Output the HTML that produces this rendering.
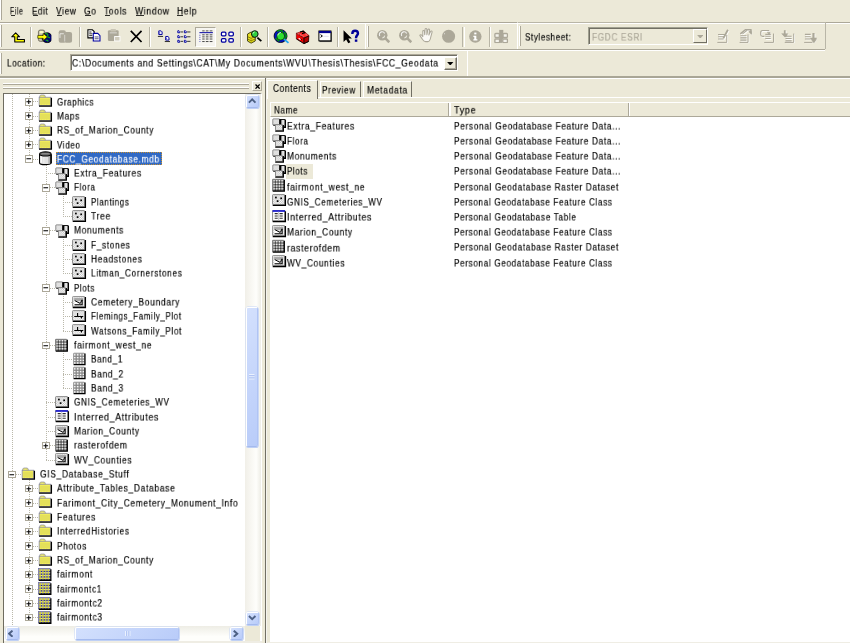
<!DOCTYPE html>
<html><head><meta charset="utf-8"><style>
html,body{margin:0;padding:0;width:850px;height:643px;overflow:hidden;background:#ECE9D8}
body{position:relative;font-family:"Liberation Sans",sans-serif;font-size:10px;color:#000}
div,span,svg{position:absolute}
.t{white-space:nowrap;line-height:12px;transform-origin:0 0;-webkit-font-smoothing:antialiased;will-change:transform;-webkit-text-stroke:0.18px currentColor}
.pb{width:7.5px;height:7.5px;border:1px solid #ACA899;background:#fff;box-sizing:border-box}
.sbtn{background:linear-gradient(135deg,#D3E0FD,#B9CCF9);border:1px solid #fff;border-right-color:#B0C4F4;border-bottom-color:#A4BAEE;border-radius:2px;box-sizing:border-box;box-shadow:0 0 0 0.5px #C6D5F7,0.4px 0.8px 0 0.2px #B8CAF2}
</style></head><body>
<svg width="0" height="0" style="position:absolute"><defs>
<pattern id="dith" width="2" height="2" patternUnits="userSpaceOnUse"><rect width="2" height="2" fill="#fff"/><rect width="1" height="1" fill="#C0C0C0"/><rect x="1" y="1" width="1" height="1" fill="#C0C0C0"/></pattern>
<pattern id="dithy" width="2" height="2" patternUnits="userSpaceOnUse"><rect width="2" height="2" fill="#FFFF60"/><rect width="1" height="1" fill="#E0D860"/><rect x="1" y="1" width="1" height="1" fill="#E8E070"/></pattern>
<symbol id="i_folder" viewBox="0 0 16 16"><path d="M2 4.6V2.2L2.9 1.2H7.1L8 2.2V4.6" fill="#F6F25A" stroke="#8A8AA6" stroke-width="0.9"/><path d="M3 2.6H7" stroke="#FFFFA0" stroke-width="0.8" stroke-dasharray="0.9 0.9"/><rect x="1.3" y="3.6" width="12.9" height="9.3" fill="#F4F05A" stroke="#8A8AA6" stroke-width="0.9"/><rect x="2.3" y="5.3" width="11" height="6.6" fill="#E4E05A"/><path d="M2.6 11.9H13" stroke="#F8F470" stroke-width="0.8" stroke-dasharray="0.9 0.9"/><path d="M1.1 13.5H15V4.1" fill="none" stroke="#000" stroke-width="1.5"/></symbol>
<symbol id="i_gdb" viewBox="0 0 16 16" overflow="visible"><path d="M1.8 2.2V12.2C1.8 14.8 14.6 14.8 14.6 12.2V2.2" fill="#E2E2E2" stroke="#000" stroke-width="1.3"/><path d="M3.4 4.5V12" stroke="#fff" stroke-width="1.6"/><path d="M6.5 5.5V12.5" stroke="#F0F0F0" stroke-width="1"/><path d="M12.4 4.5V12.6" stroke="#A8A8A8" stroke-width="1.5"/><path d="M14.6 3V12.5" stroke="#000" stroke-width="1.6"/><ellipse cx="8.2" cy="2.2" rx="6.4" ry="2.3" fill="#6C6C6C" stroke="#000" stroke-width="1.3"/><path d="M4.5 1.8H12" stroke="#9A9A9A" stroke-width="0.8"/></symbol>
<symbol id="i_fds" viewBox="0 0 16 16" overflow="visible"><g transform="translate(0 1)"><rect x="0.9" y="1.1" width="7.8" height="7" rx="0.6" fill="url(#dith)" stroke="#808080" stroke-width="1"/><path d="M1.4 8.2H8.6" stroke="#000" stroke-width="0.9"/><rect x="8.6" y="1.9" width="6" height="8.2" fill="#fff" stroke="#000" stroke-width="1.1"/><path d="M9.6 1.9V10" stroke="#000" stroke-width="1.9"/><path d="M12.2 3V9" stroke="#B8B8B8" stroke-width="1"/><path d="M15 2.4V10.7H12.5" fill="none" stroke="#000" stroke-width="1.3"/><rect x="3.9" y="7.6" width="8" height="6.4" rx="0.6" fill="url(#dith)" stroke="#808080" stroke-width="1"/><path d="M3.6 14.7H12.6V7.8" fill="none" stroke="#000" stroke-width="1.5"/></g></symbol>
<symbol id="i_pt" viewBox="0 0 16 16"><rect x="0.6" y="1.8" width="13.6" height="11.2" rx="0.8" fill="url(#dith)" stroke="#808080" stroke-width="1"/><path d="M0.8 13.8H15V2.2" fill="none" stroke="#000" stroke-width="1.6"/><rect x="3.4" y="4.1" width="1.9" height="1.9"/><rect x="9.3" y="5" width="1.9" height="1.9"/><rect x="5.3" y="8.1" width="1.9" height="1.9"/></symbol>
<symbol id="i_poly" viewBox="0 0 16 16"><rect x="0.6" y="1.7" width="13.6" height="11.5" rx="0.8" fill="url(#dith)" stroke="#8C8C8C" stroke-width="1"/><rect x="2.4" y="3.4" width="10" height="3.2" fill="#A8A8A8"/><path d="M0.8 13.9H15V2.2" fill="none" stroke="#000" stroke-width="1.6"/><path d="M2.6 6.4L9.2 9.6L11.6 5.4V10.8H2.6Z" fill="#fff"/><path d="M12.2 5V11" stroke="#fff" stroke-width="0.9"/><path d="M2.9 10.9H11.3V5.2" fill="none" stroke="#000" stroke-width="1.3"/><path d="M3.2 6.3L9.2 9.5L11.3 5.4" fill="none" stroke="#000" stroke-width="1.1"/></symbol>
<symbol id="i_line" viewBox="0 0 16 16"><rect x="0.6" y="1.8" width="13.6" height="11.2" rx="0.8" fill="url(#dith)" stroke="#808080" stroke-width="1"/><path d="M0.8 13.8H15V2.2" fill="none" stroke="#000" stroke-width="1.6"/><path d="M2.5 8.4H12.5M6.2 4.5V8.4M10.5 8.4V11" fill="none" stroke="#000" stroke-width="1.3"/><path d="M2.5 11.2H12.5" stroke="#fff" stroke-width="1" stroke-dasharray="1 1"/></symbol>
<symbol id="i_ras" viewBox="0 0 16 16"><rect x="0.4" y="1.4" width="12.8" height="12.8" rx="0.6" fill="#7C7C7C" stroke="#6A6A6A" stroke-width="0.8"/><g fill="#F8F8F8"><rect x="1.60" y="2.30" width="1.4" height="1.4"/><rect x="4.60" y="2.30" width="1.4" height="1.4"/><rect x="7.60" y="2.30" width="1.4" height="1.4"/><rect x="10.60" y="2.30" width="1.4" height="1.4"/><rect x="1.60" y="5.30" width="1.4" height="1.4"/><rect x="4.60" y="5.30" width="1.4" height="1.4"/><rect x="7.60" y="5.30" width="1.4" height="1.4"/><rect x="10.60" y="5.30" width="1.4" height="1.4"/><rect x="1.60" y="8.30" width="1.4" height="1.4"/><rect x="4.60" y="8.30" width="1.4" height="1.4"/><rect x="7.60" y="8.30" width="1.4" height="1.4"/><rect x="10.60" y="8.30" width="1.4" height="1.4"/><rect x="1.60" y="11.30" width="1.4" height="1.4"/><rect x="4.60" y="11.30" width="1.4" height="1.4"/><rect x="7.60" y="11.30" width="1.4" height="1.4"/><rect x="10.60" y="11.30" width="1.4" height="1.4"/></g><g fill="#1A1A1A"><rect x="3.20" y="3.90" width="1.1" height="1.1"/><rect x="6.20" y="3.90" width="1.1" height="1.1"/><rect x="9.20" y="3.90" width="1.1" height="1.1"/><rect x="12.20" y="3.90" width="1.1" height="1.1"/><rect x="3.20" y="6.90" width="1.1" height="1.1"/><rect x="6.20" y="6.90" width="1.1" height="1.1"/><rect x="9.20" y="6.90" width="1.1" height="1.1"/><rect x="12.20" y="6.90" width="1.1" height="1.1"/><rect x="3.20" y="9.90" width="1.1" height="1.1"/><rect x="6.20" y="9.90" width="1.1" height="1.1"/><rect x="9.20" y="9.90" width="1.1" height="1.1"/><rect x="12.20" y="9.90" width="1.1" height="1.1"/><rect x="3.20" y="12.90" width="1.1" height="1.1"/><rect x="6.20" y="12.90" width="1.1" height="1.1"/><rect x="9.20" y="12.90" width="1.1" height="1.1"/><rect x="12.20" y="12.90" width="1.1" height="1.1"/></g><path d="M0.8 14.6H13.8V2" fill="none" stroke="#000" stroke-width="1.3"/></symbol>
<symbol id="i_band" viewBox="0 0 16 16"><rect x="1.7" y="1.3" width="12.2" height="12.4" rx="0.6" fill="#B8B8B8" stroke="#8A8A8A" stroke-width="0.8"/><g fill="#FAFAFA"><rect x="2.30" y="2.50" width="1.6" height="1.4"/><rect x="5.60" y="2.50" width="1.6" height="1.4"/><rect x="8.80" y="2.50" width="1.6" height="1.4"/><rect x="11.80" y="2.50" width="1.6" height="1.4"/><rect x="2.30" y="5.65" width="1.6" height="1.4"/><rect x="5.60" y="5.65" width="1.6" height="1.4"/><rect x="8.80" y="5.65" width="1.6" height="1.4"/><rect x="11.80" y="5.65" width="1.6" height="1.4"/><rect x="2.30" y="8.60" width="1.6" height="1.4"/><rect x="5.60" y="8.60" width="1.6" height="1.4"/><rect x="8.80" y="8.60" width="1.6" height="1.4"/><rect x="11.80" y="8.60" width="1.6" height="1.4"/><rect x="2.30" y="11.50" width="1.6" height="1.4"/><rect x="5.60" y="11.50" width="1.6" height="1.4"/><rect x="8.80" y="11.50" width="1.6" height="1.4"/><rect x="11.80" y="11.50" width="1.6" height="1.4"/></g><path d="M4.7 1.6V13.5M8.1 1.6V13.5M11.2 1.6V13.5M2 4.8H13.6M2 7.9H13.6M2 10.7H13.6" stroke="#7A7A7A" stroke-width="0.8"/><path d="M1.8 14.2H14.5V1.8" fill="none" stroke="#000" stroke-width="1.4"/></symbol>
<symbol id="i_tbl" viewBox="0 0 16 16"><rect x="0.7" y="2" width="13.6" height="11.4" fill="#fff" stroke="#808080" stroke-width="1"/><path d="M0.6 2.3H14.6" stroke="#0000D0" stroke-width="1.6"/><path d="M0.8 14H15V2.6" fill="none" stroke="#000" stroke-width="1.5"/><path d="M3 5.2H6.4M8.4 5.2H12M3 7.8H6.4M8.4 7.8H12M3 10.4H6.4M8.4 10.4H12" stroke="#303030" stroke-width="1.2"/><path d="M7.4 3V13" stroke="#B0B0B0" stroke-width="0.8"/></symbol>
<symbol id="i_rasc" viewBox="0 0 16 16"><rect x="0.5" y="1.6" width="13" height="12.6" fill="#8C8CA0" stroke="#7070A0" stroke-width="0.8"/><path d="M0.8 14.8H14.3V2.4" fill="none" stroke="#000" stroke-width="1.5"/><g fill="#F4F000"><rect x="1.60" y="2.70" width="1.7" height="1.6"/><rect x="4.65" y="2.70" width="1.7" height="1.6"/><rect x="7.70" y="2.70" width="1.7" height="1.6"/><rect x="10.75" y="2.70" width="1.7" height="1.6"/><rect x="1.60" y="5.75" width="1.7" height="1.6"/><rect x="4.65" y="5.75" width="1.7" height="1.6"/><rect x="7.70" y="5.75" width="1.7" height="1.6"/><rect x="10.75" y="5.75" width="1.7" height="1.6"/><rect x="1.60" y="8.80" width="1.7" height="1.6"/><rect x="4.65" y="8.80" width="1.7" height="1.6"/><rect x="7.70" y="8.80" width="1.7" height="1.6"/><rect x="10.75" y="8.80" width="1.7" height="1.6"/><rect x="1.60" y="11.85" width="1.7" height="1.6"/><rect x="4.65" y="11.85" width="1.7" height="1.6"/><rect x="7.70" y="11.85" width="1.7" height="1.6"/><rect x="10.75" y="11.85" width="1.7" height="1.6"/></g><g fill="#F0F0F8"><rect x="3.50" y="2.90" width="0.9" height="0.9"/><rect x="6.55" y="2.90" width="0.9" height="0.9"/><rect x="9.60" y="2.90" width="0.9" height="0.9"/><rect x="12.65" y="2.90" width="0.9" height="0.9"/><rect x="3.50" y="5.95" width="0.9" height="0.9"/><rect x="6.55" y="5.95" width="0.9" height="0.9"/><rect x="9.60" y="5.95" width="0.9" height="0.9"/><rect x="12.65" y="5.95" width="0.9" height="0.9"/><rect x="3.50" y="9.00" width="0.9" height="0.9"/><rect x="6.55" y="9.00" width="0.9" height="0.9"/><rect x="9.60" y="9.00" width="0.9" height="0.9"/><rect x="12.65" y="9.00" width="0.9" height="0.9"/><rect x="3.50" y="12.05" width="0.9" height="0.9"/><rect x="6.55" y="12.05" width="0.9" height="0.9"/><rect x="9.60" y="12.05" width="0.9" height="0.9"/><rect x="12.65" y="12.05" width="0.9" height="0.9"/></g><g fill="#181820"><rect x="3.50" y="4.50" width="0.9" height="0.9"/><rect x="6.55" y="4.50" width="0.9" height="0.9"/><rect x="9.60" y="4.50" width="0.9" height="0.9"/><rect x="12.65" y="4.50" width="0.9" height="0.9"/><rect x="3.50" y="7.55" width="0.9" height="0.9"/><rect x="6.55" y="7.55" width="0.9" height="0.9"/><rect x="9.60" y="7.55" width="0.9" height="0.9"/><rect x="12.65" y="7.55" width="0.9" height="0.9"/><rect x="3.50" y="10.60" width="0.9" height="0.9"/><rect x="6.55" y="10.60" width="0.9" height="0.9"/><rect x="9.60" y="10.60" width="0.9" height="0.9"/><rect x="12.65" y="10.60" width="0.9" height="0.9"/><rect x="3.50" y="13.65" width="0.9" height="0.9"/><rect x="6.55" y="13.65" width="0.9" height="0.9"/><rect x="9.60" y="13.65" width="0.9" height="0.9"/><rect x="12.65" y="13.65" width="0.9" height="0.9"/></g></symbol>

<symbol id="tb_up" viewBox="0 0 16 16"><path d="M5.2 3.2L9.6 7.6H7V10.6H15V13.4H4.2V7.6H0.8Z" fill="#FFFF00" stroke="#000" stroke-width="1.2" stroke-linejoin="round"/></symbol>
<symbol id="tb_conn" viewBox="0 0 16 16"><rect x="1.6" y="1.2" width="7" height="12.6" rx="2" fill="#C8C4B0" stroke="#555040" stroke-width="0.8"/><rect x="3" y="2.2" width="4" height="2.6" rx="1" fill="#FFFFC0"/><circle cx="11.3" cy="9.8" r="5.6" fill="#000070" stroke="#000" stroke-width="0.9"/><path d="M9 4.8C11 5 12.5 6 12 7.5C11.5 9 13 10 14.5 9.5M9.8 13C10.5 12 12 12.5 12.5 14" fill="none" stroke="#10A020" stroke-width="1.5"/><path d="M8 9.6L9.8 9.6" stroke="#2060FF" stroke-width="1"/><path d="M0.9 7.2H6.9V4.8L11.6 8.8L6.9 12.8V10.4H0.9Z" fill="#FFFF00" stroke="#303000" stroke-width="0.8"/></symbol>
<symbol id="tb_disc" viewBox="0 0 16 16"><rect x="0.8" y="1.4" width="8" height="14" rx="2.2" fill="#ACA899"/><rect x="6.8" y="3.4" width="9" height="12" rx="2.5" fill="#ACA899"/><path d="M2.2 5.3H6.5M2.2 5.3V10" stroke="#fff" stroke-width="0.9" fill="none" opacity=".85"/><path d="M7.5 6.5V14" stroke="#fff" stroke-width="0.8" opacity=".7"/></symbol>
<symbol id="tb_copy" viewBox="0 0 16 16"><path d="M1 2H6L8 4V11H1Z" fill="#fff" stroke="#000" stroke-width="1.2"/><path d="M2.5 4.5H5M2.5 6.5H6M2.5 8.5H6" stroke="#000" stroke-width="0.9"/><path d="M7 6H12L14.5 8.5V14.5H7Z" fill="#fff" stroke="#0000A0" stroke-width="1.2"/><path d="M8.5 10H13M8.5 12H13" stroke="#303060" stroke-width="0.9"/></symbol>
<symbol id="tb_paste" viewBox="0 0 16 16"><rect x="1" y="2.5" width="12" height="12" rx="1.5" fill="#ACA899"/><rect x="4" y="1" width="6" height="3" rx="1" fill="#C8C4B4"/><rect x="3" y="4.8" width="8" height="1.2" fill="#fff" opacity=".5"/><rect x="8" y="9" width="7" height="6" fill="#fff"/><rect x="9" y="10" width="5" height="4" fill="#D0CCBC"/></symbol>
<symbol id="tb_del" viewBox="0 0 16 16"><path d="M2 2L14 14.5M14 2L2 14.5" stroke="#000" stroke-width="1.9"/></symbol>
<symbol id="tb_large" viewBox="0 0 16 16"><path d="M2 2.1H4.6L5.7 3.2V6.2H2Z" fill="#fff" stroke="#0000A0" stroke-width="1.1"/><path d="M3 3.5V5.3" stroke="#0000A0" stroke-width="0.6"/><path d="M1 8.3H6.8" stroke="#000" stroke-width="0.9"/><path d="M9.7 8.4H12.2L13.4 9.5V12.4H9.7Z" fill="#fff" stroke="#0000A0" stroke-width="1.1"/><path d="M10.7 9.8V11.5" stroke="#0000A0" stroke-width="0.6"/><path d="M8.7 14H14.5" stroke="#000" stroke-width="0.9"/></symbol>
<symbol id="tb_list" viewBox="0 0 16 16"><g fill="#fff" stroke="#0000A0" stroke-width="1.1"><path d="M0.9 2H2.3L3 2.7V4.2H0.9Z"/><path d="M0.9 7.5H2.3L3 8.2V9.7H0.9Z"/><path d="M0.9 12.6H2.3L3 13.3V14.8H0.9Z"/><path d="M8.2 2H9.6L10.3 2.7V4.2H8.2Z"/><path d="M8.2 7.5H9.6L10.3 8.2V9.7H8.2Z"/><path d="M8.2 12.6H9.6L10.3 13.3V14.8H8.2Z"/></g><path d="M4 3.3H6.8M11.3 3.3H15M4 8.7H6.8M11.3 8.7H15M4 13.8H6.8M11.3 13.8H15" stroke="#333" stroke-width="1.1"/></symbol>
<symbol id="tb_det" viewBox="0 0 16 16"><path d="M3.6 2.1H6.3M7.6 2.1H10.6M11.9 2.1H15" stroke="#404040" stroke-width="1"/><path d="M0.5 4.1H15.5" stroke="#0000A0" stroke-width="1.1"/><path d="M1 6.5V14.2" stroke="#0000A0" stroke-width="0.9" stroke-dasharray="0.9 1.4"/><path d="M3.6 6.5H6.3M7.6 6.5H10.6M11.9 6.5H15M3.6 8.8H6.3M7.6 8.8H10.6M11.9 8.8H15M3.6 11.2H6.3M7.6 11.2H10.6M11.9 11.2H15M3.6 14H6.3M7.6 14H10.6M11.9 14H15" stroke="#202020" stroke-width="0.9"/></symbol>
<symbol id="tb_thumb" viewBox="0 0 16 16"><g fill="#fff" stroke="#0000A0" stroke-width="1.4"><rect x="1.6" y="3.6" width="5" height="4" rx="1.2"/><rect x="9.9" y="3.6" width="5" height="4" rx="1.2"/><rect x="1.6" y="10.7" width="5" height="4" rx="1.2"/><rect x="9.9" y="10.7" width="5" height="4" rx="1.2"/></g></symbol>
<symbol id="tb_search" viewBox="0 0 16 16" overflow="visible"><path d="M0.6 5.6L4.6 3.4L9.2 5.2V13.4L4.6 15.8L0.6 13.5Z" fill="#E8E020" stroke="#202000" stroke-width="0.9"/><path d="M0.8 8.6L4.6 10.4L9 8.6M0.8 11.3L4.6 13.1L9 11.3" fill="none" stroke="#706800" stroke-width="0.9"/><path d="M4.6 10.4V15.6" stroke="#A09800" stroke-width="0.7"/><path d="M11.6 9.7L16 13.6" stroke="#000" stroke-width="2"/><circle cx="8.7" cy="5.6" r="3.7" fill="#30D040" stroke="#101010" stroke-width="1.1"/><path d="M6.7 5.2C6.7 4.2 7.5 3.5 8.4 3.5" stroke="#E0FFE0" stroke-width="1" fill="none"/></symbol>
<symbol id="tb_globe" viewBox="0 0 16 16" overflow="visible"><circle cx="7.3" cy="7.9" r="7.2" fill="#0010C8" stroke="#000" stroke-width="0.9"/><path d="M3.5 2.5C5 1.8 7.5 1.5 9 2.5C10 3.5 9 4.5 7.5 4.6M11 3.5C12.5 4.5 13.5 6 13.8 8C13 9 12 10 11.5 12M2 10C3 11 4 12.5 6 13.5" fill="none" stroke="#009010" stroke-width="1.8"/><path d="M10.8 11.1L16.2 15.6" stroke="#20A8F0" stroke-width="1.9"/><circle cx="7.5" cy="8" r="4.4" fill="#30E030" stroke="#103010" stroke-width="0.9"/><path d="M4.3 7.2C4.5 5.4 5.8 4.1 7.6 3.9" stroke="#E8FFFF" stroke-width="1.1" fill="none"/></symbol>
<symbol id="tb_tool" viewBox="0 0 16 16"><path d="M1.5 3.6L9.5 0.9L15.9 6.5L10 9Z" fill="#FF3030" stroke="#600000" stroke-width="0.6"/><path d="M1.5 3.6L10 9V15.2L1.5 9.9Z" fill="#F00000" stroke="#500000" stroke-width="0.6"/><path d="M10 9L15.9 6.5L15.3 12.8L10 15.2Z" fill="#B00000" stroke="#000" stroke-width="0.9"/><path d="M5.6 2.2L9 1.2L11 3L7.8 4" fill="none" stroke="#000" stroke-width="1.3"/><path d="M3 4.2L4 4.6M6 5.5L7 6M8.5 6.5L9.3 7M12 5L13 5.6" stroke="#C0FFFF" stroke-width="0.8"/><path d="M4 9.3L6.2 10.6" stroke="#fff" stroke-width="1.3"/><path d="M6.5 9.8L7.5 10.8" stroke="#000" stroke-width="1.1"/><path d="M1.5 9.9L10 15.2L15.3 12.8" fill="none" stroke="#000" stroke-width="0.9"/></symbol>
<symbol id="tb_cmd" viewBox="0 0 16 16"><rect x="1" y="2.2" width="13.5" height="11" fill="#fff" stroke="#000" stroke-width="1.1"/><rect x="1" y="2.2" width="13.5" height="2.4" fill="#000090"/><path d="M2.8 6.3L4.9 7.8L2.8 9.3" fill="none" stroke="#000" stroke-width="1.1"/><path d="M6 8.2H12" stroke="#D0D0E0" stroke-width="0.8"/><path d="M1.6 14H15V3" fill="none" stroke="#303030" stroke-width="1.1"/></symbol>
<symbol id="tb_help" viewBox="0 0 16 16" overflow="visible"><path d="M0.6 1.5V14.5L3.5 11.7L5.9 16L8.3 14.8L6 10.7H9.9Z" fill="#000"/><path d="M10.4 5.6C10.4 3.3 11.7 2 13.5 2C15.4 2 16.7 3.1 16.7 4.9C16.7 7 14.6 7.3 14.6 9.6V10.2" fill="none" stroke="#000098" stroke-width="2.7"/><rect x="13.2" y="11.7" width="2.8" height="2.6" fill="#000098"/></symbol>
<symbol id="tb_zin" viewBox="0 0 16 16"><circle cx="7" cy="7" r="5.8" fill="#ACA899"/><path d="M9.6 5C9 3.5 7.5 2.8 6 3.2C4 3.8 3.2 6 4.2 7.9" stroke="#fff" stroke-width="1.2" fill="none" opacity=".85"/><path d="M9.8 7.5C9.5 9 8.5 9.9 7 10" stroke="#E8E6DC" stroke-width="1.2" fill="none"/><path d="M10.5 10.5L14.8 14.8" stroke="#ACA899" stroke-width="2.8"/></symbol>
<symbol id="tb_zout" viewBox="0 0 16 16"><circle cx="7" cy="7" r="5.8" fill="#ACA899"/><path d="M9.6 5C9 3.5 7.5 2.8 6 3.2C4 3.8 3.2 6 4.2 7.9" stroke="#fff" stroke-width="1.2" fill="none" opacity=".85"/><path d="M9.8 7.5C9.5 9 8.5 9.9 7 10" stroke="#E8E6DC" stroke-width="1.2" fill="none"/><path d="M10.5 10.5L14.8 14.8" stroke="#ACA899" stroke-width="2.8"/></symbol>
<symbol id="tb_pan" viewBox="0 0 16 16" overflow="visible"><path d="M0.9 8.2C1.4 7.2 2.6 7.4 3.3 8.3L4.3 9.6L4.2 3.6C4.2 2.5 5.9 2.4 6 3.5L6.4 7.6L6.8 1.4C6.9 0.3 8.7 0.3 8.7 1.4L8.8 7.4L10 1.9C10.3 0.9 12 1.1 11.8 2.2L11 7.8L12.9 3.9C13.4 3 15 3.4 14.6 4.5L13.2 9.8C12.6 12.5 12.3 15.2 9.8 15.2H7.4C5.8 15.2 4.9 14.2 4 12.9Z" fill="#FBFAF6" stroke="#ACA899" stroke-width="1.15" stroke-linejoin="round"/></symbol>
<symbol id="tb_full" viewBox="0 0 16 16"><circle cx="8.5" cy="8.1" r="7.3" fill="#ACA899"/><path d="M3.6 5.5L4.4 5" stroke="#fff" stroke-width="1"/></symbol>
<symbol id="tb_id" viewBox="0 0 16 16"><circle cx="8.2" cy="8.4" r="6.9" fill="#ACA899"/><rect x="7" y="4" width="2.4" height="2" fill="#fff"/><path d="M6 7.5H9.3V11.5H10.5V12.8H6V11.5H7V8.8H6Z" fill="#fff"/></symbol>
<symbol id="tb_thumbc" viewBox="0 0 16 16"><g fill="#F4F3EC" stroke="#ACA899" stroke-width="1.5"><rect x="1" y="5" width="5" height="4.5" rx="1"/><rect x="10" y="5" width="5" height="4.5" rx="1"/><rect x="1" y="11.2" width="5.2" height="4" rx="0.8"/><rect x="9.8" y="11.2" width="5.2" height="4" rx="0.8"/></g><rect x="5.8" y="1" width="4.6" height="10.5" fill="#ACA899"/><rect x="6.5" y="9" width="2.5" height="6.5" fill="#ACA899"/></symbol>
<symbol id="tb_m1" viewBox="0 0 16 16"><g transform="translate(0.9 0.9)" stroke="#fff" fill="none" opacity=".9"><path d="M2.3 6.2H10.5M2.3 8.7H9.5M2.3 11.2H8.5" stroke-width="1.2"/><path d="M1.5 15H12V6.7" stroke-width="1.1"/><path d="M13.3 0.8L8.2 10.5" stroke-width="2"/></g><g stroke="#ACA899" fill="none"><path d="M2.3 6.2H10.5M2.3 8.7H9.5M2.3 11.2H8.5" stroke-width="1.2"/><path d="M1.5 15H12V6.7" stroke-width="1.1"/><path d="M13.3 0.8L8.2 10.5" stroke-width="2"/></g></symbol>
<symbol id="tb_m2" viewBox="0 0 16 16"><g transform="translate(0.9 0.9)" stroke="#fff" fill="none" opacity=".9"><path d="M2.6 7.5H9.5M2.6 9.9H9.5M2.6 12.4H9.5" stroke-width="1.2"/><path d="M1.8 15H11.2V6" stroke-width="1.1"/><path d="M2.6 5.5L8.3 0.8H14.5" stroke-width="1.6"/><path d="M15 0.5V5.8L12.3 3.2Z" fill="#ACA899" stroke-width="0.8"/><path d="M5 5.5L10 1.5" stroke-width="1.2"/></g><g stroke="#ACA899" fill="none"><path d="M2.6 7.5H9.5M2.6 9.9H9.5M2.6 12.4H9.5" stroke-width="1.2"/><path d="M1.8 15H11.2V6" stroke-width="1.1"/><path d="M2.6 5.5L8.3 0.8H14.5" stroke-width="1.6"/><path d="M15 0.5V5.8L12.3 3.2Z" fill="#ACA899" stroke-width="0.8"/><path d="M5 5.5L10 1.5" stroke-width="1.2"/></g></symbol>
<symbol id="tb_m3" viewBox="0 0 16 16"><g transform="translate(0.9 0.9)" stroke="#fff" fill="none" opacity=".9"><path d="M5.9 6H12M5.9 8.1H12M5.9 10.7H12" stroke-width="1.2"/><path d="M4.7 15H15.1V5.1" stroke-width="1.1"/><path d="M10.3 1.7H3C1.5 1.7 0.8 2.5 0.8 3.8V6.5C0.8 7.5 1.5 8.2 3 8.2H5" stroke-width="1.3"/><path d="M8.2 3.5L11.4 3.5L9.8 5.8Z" fill="#ACA899" stroke-width="0.6"/></g><g stroke="#ACA899" fill="none"><path d="M5.9 6H12M5.9 8.1H12M5.9 10.7H12" stroke-width="1.2"/><path d="M4.7 15H15.1V5.1" stroke-width="1.1"/><path d="M10.3 1.7H3C1.5 1.7 0.8 2.5 0.8 3.8V6.5C0.8 7.5 1.5 8.2 3 8.2H5" stroke-width="1.3"/><path d="M8.2 3.5L11.4 3.5L9.8 5.8Z" fill="#ACA899" stroke-width="0.6"/></g></symbol>
<symbol id="tb_m4" viewBox="0 0 16 16"><g transform="translate(0.9 0.9)" stroke="#fff" fill="none" opacity=".9"><path d="M5 8.1H11.9M5 10.7H11.9M5 13.3H11.9" stroke-width="1.2"/><path d="M4.2 15H14.2V5.1" stroke-width="1.1"/><path d="M4.2 1.3V5.5" stroke-width="2"/><path d="M0.8 5.2H7.6L4.2 8.8Z" fill="#ACA899" stroke-width="0.6"/></g><g stroke="#ACA899" fill="none"><path d="M5 8.1H11.9M5 10.7H11.9M5 13.3H11.9" stroke-width="1.2"/><path d="M4.2 15H14.2V5.1" stroke-width="1.1"/><path d="M4.2 1.3V5.5" stroke-width="2"/><path d="M0.8 5.2H7.6L4.2 8.8Z" fill="#ACA899" stroke-width="0.6"/></g></symbol>
<symbol id="tb_m5" viewBox="0 0 16 16"><g transform="translate(0.9 0.9)" stroke="#fff" fill="none" opacity=".9"><path d="M2.1 6H8.6M2.1 8.6H8.6M2.1 11.2H8.6" stroke-width="1.2"/><path d="M1.3 15H10.5" stroke-width="1.1"/><path d="M11.7 4.6V10.5" stroke-width="2.4"/><path d="M8.2 10H15.2L11.7 15.2Z" fill="#ACA899" stroke-width="0.6"/></g><g stroke="#ACA899" fill="none"><path d="M2.1 6H8.6M2.1 8.6H8.6M2.1 11.2H8.6" stroke-width="1.2"/><path d="M1.3 15H10.5" stroke-width="1.1"/><path d="M11.7 4.6V10.5" stroke-width="2.4"/><path d="M8.2 10H15.2L11.7 15.2Z" fill="#ACA899" stroke-width="0.6"/></g></symbol>
</defs></svg>
<div style="left:0.00px;top:0.00px;width:1.30px;height:20.00px;background:#fff"></div>
<div style="left:1.30px;top:0.00px;width:1.20px;height:20.00px;background:#ACA899"></div>
<div style="left:0.00px;top:25.40px;width:1.30px;height:21.20px;background:#fff"></div>
<div style="left:1.30px;top:25.40px;width:1.20px;height:21.20px;background:#ACA899"></div>
<div style="left:0.00px;top:52.60px;width:1.30px;height:21.20px;background:#fff"></div>
<div style="left:1.30px;top:52.60px;width:1.20px;height:21.20px;background:#ACA899"></div>
<div style="left:0.00px;top:21.60px;width:850.00px;height:1.10px;background:#ACA899"></div>
<div style="left:0.00px;top:22.70px;width:850.00px;height:1.20px;background:#fff"></div>
<div style="left:0.00px;top:49.00px;width:825.30px;height:1.10px;background:#ACA899"></div>
<div style="left:0.00px;top:50.10px;width:825.30px;height:1.20px;background:#fff"></div>
<span class="t" style="left:10.10px;top:5.81px;font-size:10.0px;letter-spacing:0.85px;transform:scale(0.6917,0.95);">File</span>
<div style="left:10.90px;top:15.10px;width:4.50px;height:0.90px;background:#000;opacity:.8"></div>
<span class="t" style="left:32.00px;top:5.81px;font-size:10.0px;letter-spacing:0.85px;transform:scale(0.7929,0.95);">Edit</span>
<div style="left:32.80px;top:15.10px;width:5.00px;height:0.90px;background:#000;opacity:.8"></div>
<span class="t" style="left:56.00px;top:5.81px;font-size:10.0px;letter-spacing:0.85px;transform:scale(0.8316,0.95);">View</span>
<div style="left:56.80px;top:15.10px;width:5.50px;height:0.90px;background:#000;opacity:.8"></div>
<span class="t" style="left:84.20px;top:5.81px;font-size:10.0px;letter-spacing:0.85px;transform:scale(0.8310,0.95);">Go</span>
<div style="left:85.00px;top:15.10px;width:6.00px;height:0.90px;background:#000;opacity:.8"></div>
<span class="t" style="left:104.20px;top:5.81px;font-size:10.0px;letter-spacing:0.85px;transform:scale(0.8336,0.95);">Tools</span>
<div style="left:105.00px;top:15.10px;width:5.00px;height:0.90px;background:#000;opacity:.8"></div>
<span class="t" style="left:134.80px;top:5.81px;font-size:10.0px;letter-spacing:0.85px;transform:scale(0.8557,0.95);">Window</span>
<div style="left:135.60px;top:15.10px;width:8.00px;height:0.90px;background:#000;opacity:.8"></div>
<span class="t" style="left:176.50px;top:5.81px;font-size:10.0px;letter-spacing:0.85px;transform:scale(0.8442,0.95);">Help</span>
<div style="left:177.30px;top:15.10px;width:5.50px;height:0.90px;background:#000;opacity:.8"></div>
<div style="left:30.00px;top:27.20px;width:1.10px;height:20.20px;background:#B8B5A6"></div>
<div style="left:31.10px;top:27.20px;width:1.10px;height:20.20px;background:#fff"></div>
<div style="left:78.90px;top:27.20px;width:1.10px;height:20.20px;background:#B8B5A6"></div>
<div style="left:80.00px;top:27.20px;width:1.10px;height:20.20px;background:#fff"></div>
<div style="left:149.20px;top:27.20px;width:1.10px;height:20.20px;background:#B8B5A6"></div>
<div style="left:150.30px;top:27.20px;width:1.10px;height:20.20px;background:#fff"></div>
<div style="left:239.90px;top:27.20px;width:1.10px;height:20.20px;background:#B8B5A6"></div>
<div style="left:241.00px;top:27.20px;width:1.10px;height:20.20px;background:#fff"></div>
<div style="left:267.30px;top:27.20px;width:1.10px;height:20.20px;background:#B8B5A6"></div>
<div style="left:268.40px;top:27.20px;width:1.10px;height:20.20px;background:#fff"></div>
<div style="left:336.90px;top:27.20px;width:1.10px;height:20.20px;background:#B8B5A6"></div>
<div style="left:338.00px;top:27.20px;width:1.10px;height:20.20px;background:#fff"></div>
<div style="left:462.40px;top:27.20px;width:1.10px;height:20.20px;background:#B8B5A6"></div>
<div style="left:463.50px;top:27.20px;width:1.10px;height:20.20px;background:#fff"></div>
<div style="left:488.80px;top:27.20px;width:1.10px;height:20.20px;background:#B8B5A6"></div>
<div style="left:489.90px;top:27.20px;width:1.10px;height:20.20px;background:#fff"></div>
<div style="left:365.00px;top:23.00px;width:1.00px;height:26.00px;background:#fff"></div>
<div style="left:367.00px;top:26.00px;width:1.10px;height:21.00px;background:#fff"></div>
<div style="left:368.10px;top:26.00px;width:1.10px;height:21.00px;background:#ACA899"></div>
<div style="left:516.8px;top:22.3px;width:309px;height:27px;border-top:1px solid #B9B6A7;border-right:1px solid #B9B6A7;border-left:1px solid #fff;box-sizing:border-box"></div>
<div style="left:519.00px;top:26.40px;width:1.10px;height:20.00px;background:#fff"></div>
<div style="left:520.10px;top:26.40px;width:1.10px;height:20.00px;background:#ACA899"></div>
<div style="left:195.3px;top:27.2px;width:20.8px;height:19.8px;background:#F6F5F0;border-top:1px solid #ACA899;border-left:1px solid #ACA899;border-right:1px solid #fff;border-bottom:1px solid #fff;box-sizing:border-box"></div>
<svg style="left:10.50px;top:29.60px;overflow:visible" width="14.33" height="14.33" viewBox="0 0 16 16"><use href="#tb_up"/></svg>
<svg style="left:37.20px;top:29.20px;overflow:visible" width="14.33" height="14.33" viewBox="0 0 16 16"><use href="#tb_conn"/></svg>
<svg style="left:58.00px;top:29.20px;overflow:visible" width="14.33" height="14.33" viewBox="0 0 16 16"><use href="#tb_disc"/></svg>
<svg style="left:86.50px;top:28.00px;overflow:visible" width="14.33" height="14.33" viewBox="0 0 16 16"><use href="#tb_copy"/></svg>
<svg style="left:107.00px;top:28.00px;overflow:visible" width="14.33" height="14.33" viewBox="0 0 16 16"><use href="#tb_paste"/></svg>
<svg style="left:128.80px;top:28.80px;overflow:visible" width="14.33" height="14.33" viewBox="0 0 16 16"><use href="#tb_del"/></svg>
<svg style="left:156.50px;top:28.80px;overflow:visible" width="14.33" height="14.33" viewBox="0 0 16 16"><use href="#tb_large"/></svg>
<svg style="left:176.60px;top:28.80px;overflow:visible" width="14.33" height="14.33" viewBox="0 0 16 16"><use href="#tb_list"/></svg>
<svg style="left:198.50px;top:28.80px;overflow:visible" width="14.33" height="14.33" viewBox="0 0 16 16"><use href="#tb_det"/></svg>
<svg style="left:219.50px;top:28.80px;overflow:visible" width="14.33" height="14.33" viewBox="0 0 16 16"><use href="#tb_thumb"/></svg>
<svg style="left:247.00px;top:29.20px;overflow:visible" width="14.33" height="14.33" viewBox="0 0 16 16"><use href="#tb_search"/></svg>
<svg style="left:273.90px;top:29.20px;overflow:visible" width="14.33" height="14.33" viewBox="0 0 16 16"><use href="#tb_globe"/></svg>
<svg style="left:295.40px;top:29.50px;overflow:visible" width="14.33" height="14.33" viewBox="0 0 16 16"><use href="#tb_tool"/></svg>
<svg style="left:317.50px;top:28.60px;overflow:visible" width="14.33" height="14.33" viewBox="0 0 16 16"><use href="#tb_cmd"/></svg>
<svg style="left:343.30px;top:29.00px;overflow:visible" width="14.33" height="14.33" viewBox="0 0 16 16"><use href="#tb_help"/></svg>
<svg style="left:375.50px;top:28.60px;overflow:visible" width="14.33" height="14.33" viewBox="0 0 16 16"><use href="#tb_zin"/></svg>
<svg style="left:397.60px;top:28.60px;overflow:visible" width="14.33" height="14.33" viewBox="0 0 16 16"><use href="#tb_zout"/></svg>
<svg style="left:419.20px;top:28.20px;overflow:visible" width="14.33" height="14.33" viewBox="0 0 16 16"><use href="#tb_pan"/></svg>
<svg style="left:440.60px;top:28.50px;overflow:visible" width="14.33" height="14.33" viewBox="0 0 16 16"><use href="#tb_full"/></svg>
<svg style="left:468.00px;top:28.80px;overflow:visible" width="14.33" height="14.33" viewBox="0 0 16 16"><use href="#tb_id"/></svg>
<svg style="left:494.20px;top:28.60px;overflow:visible" width="14.33" height="14.33" viewBox="0 0 16 16"><use href="#tb_thumbc"/></svg>
<svg style="left:716.30px;top:28.80px;overflow:visible" width="14.33" height="14.33" viewBox="0 0 16 16"><use href="#tb_m1"/></svg>
<svg style="left:738.00px;top:28.80px;overflow:visible" width="14.33" height="14.33" viewBox="0 0 16 16"><use href="#tb_m2"/></svg>
<svg style="left:760.00px;top:28.80px;overflow:visible" width="14.33" height="14.33" viewBox="0 0 16 16"><use href="#tb_m3"/></svg>
<svg style="left:781.00px;top:28.80px;overflow:visible" width="14.33" height="14.33" viewBox="0 0 16 16"><use href="#tb_m4"/></svg>
<svg style="left:803.00px;top:28.80px;overflow:visible" width="14.33" height="14.33" viewBox="0 0 16 16"><use href="#tb_m5"/></svg>
<span class="t" style="left:525.10px;top:31.51px;font-size:10.0px;letter-spacing:0.85px;transform:scale(0.7921,0.95);">Stylesheet:</span>
<div style="left:588.2px;top:27.3px;width:119.5px;height:17.3px;border-top:1.2px solid #A0A090;border-left:1.2px solid #A0A090;border-right:1px solid #fff;border-bottom:1px solid #fff;box-sizing:border-box;box-shadow:inset 1px 1px 0 #716F64"></div>
<span class="t" style="left:592.10px;top:31.51px;font-size:10.0px;letter-spacing:0.85px;transform:scale(0.8196,0.95);color:#ACA899">FGDC ESRI</span>
<div style="left:692.8px;top:29.3px;width:14px;height:13.7px;background:#ECE9D8;border-top:1px solid #fff;border-left:1px solid #fff;border-right:1px solid #716F64;border-bottom:1px solid #716F64;box-sizing:border-box"></div>
<svg style="left:696.6px;top:34.6px" width="6.5" height="3.6" viewBox="0 0 7 4"><path d="M0 0H7L3.5 4Z" fill="#ACA899"/></svg>
<span class="t" style="left:7.30px;top:57.91px;font-size:10.0px;letter-spacing:0.85px;transform:scale(0.8038,0.95);">Location:</span>
<div style="left:69.9px;top:54.2px;width:388.5px;height:17px;background:#fff;border-top:1px solid #ACA899;border-left:1px solid #ACA899;border-right:1px solid #fff;border-bottom:1px solid #fff;box-sizing:border-box;box-shadow:inset 1px 1px 0 #716F64"></div>
<span class="t" style="left:72.20px;top:57.91px;font-size:10.0px;letter-spacing:0.85px;transform:scale(0.8485,0.95);">C:\Documents and Settings\CAT\My Documents\WVU\Thesis\Thesis\FCC_Geodata</span>
<div style="left:443.5px;top:56.6px;width:13.6px;height:13.8px;background:#ECE9D8;border-top:1px solid #fff;border-left:1px solid #fff;border-right:1px solid #716F64;border-bottom:1px solid #716F64;box-sizing:border-box;box-shadow:inset -1px -1px 0 #ACA899"></div>
<svg style="left:447.3px;top:61.6px" width="6.5" height="3.6" viewBox="0 0 7 4"><path d="M0 0H7L3.5 4Z" fill="#000"/></svg>
<div style="left:467.30px;top:50.30px;width:1.00px;height:26.00px;background:#fff"></div>
<div style="left:0.00px;top:76.00px;width:850.00px;height:2.00px;background:#A9A696"></div>
<div style="left:0.00px;top:78.00px;width:850.00px;height:1.20px;background:#fff"></div>
<div style="left:3.40px;top:83.00px;width:246.00px;height:1.10px;background:#fff"></div>
<div style="left:3.40px;top:84.10px;width:246.00px;height:1.10px;background:#ACA899"></div>
<div style="left:3.40px;top:86.80px;width:246.00px;height:1.10px;background:#fff"></div>
<div style="left:3.40px;top:87.90px;width:246.00px;height:1.10px;background:#ACA899"></div>
<div style="left:252.1px;top:80.8px;width:10px;height:10px;background:#ECE9D8;border-top:1px solid #fff;border-left:1px solid #fff;border-right:1px solid #ACA899;border-bottom:1px solid #ACA899;box-sizing:border-box"></div>
<svg style="left:254.8px;top:83.8px" width="5.2" height="5.2" viewBox="0 0 6 6"><path d="M0.6 0.6L5.4 5.4M5.4 0.6L0.6 5.4" stroke="#000" stroke-width="1.5"/></svg>
<div style="left:3px;top:93px;width:259.3px;height:550px;background:#fff;border-top:1.1px solid #716F64;border-left:1.6px solid #6E6C60;border-right:2px solid #fff;box-sizing:border-box"></div>
<div style="left:264.70px;top:78.40px;width:1.20px;height:565.00px;background:#716F64"></div>
<div style="left:266.00px;top:78.40px;width:1.20px;height:565.00px;background:#F4F3EE"></div>
<div style="left:4px;top:94px;width:241.4px;height:532.5px;overflow:hidden">
<div style="left:8.00px;top:0.00px;width:1.00px;height:546.00px;background-image:linear-gradient(to bottom,#BAB8AA 50%,transparent 50%);background-size:1px 2px"></div>
<div style="left:25.00px;top:0.00px;width:1.00px;height:65.12px;background-image:linear-gradient(to bottom,#BAB8AA 50%,transparent 50%);background-size:1px 2px"></div>
<div style="left:25.00px;top:384.00px;width:1.00px;height:139.68px;background-image:linear-gradient(to bottom,#BAB8AA 50%,transparent 50%);background-size:1px 2px"></div>
<div style="left:42.00px;top:71.00px;width:1.00px;height:295.05px;background-image:linear-gradient(to bottom,#BAB8AA 50%,transparent 50%);background-size:1px 2px"></div>
<div style="left:59.00px;top:100.00px;width:1.00px;height:22.44px;background-image:linear-gradient(to bottom,#BAB8AA 50%,transparent 50%);background-size:1px 2px"></div>
<div style="left:59.00px;top:143.00px;width:1.00px;height:36.76px;background-image:linear-gradient(to bottom,#BAB8AA 50%,transparent 50%);background-size:1px 2px"></div>
<div style="left:59.00px;top:200.00px;width:1.00px;height:37.08px;background-image:linear-gradient(to bottom,#BAB8AA 50%,transparent 50%);background-size:1px 2px"></div>
<div style="left:59.00px;top:257.00px;width:1.00px;height:37.40px;background-image:linear-gradient(to bottom,#BAB8AA 50%,transparent 50%);background-size:1px 2px"></div>
<div style="left:29.00px;top:7.00px;width:5.50px;height:1.00px;background-image:linear-gradient(to right,#BAB8AA 50%,transparent 50%);background-size:2px 1px"></div>
<div class="pb" style="left:21.25px;top:4.05px"></div>
<svg style="left:21.25px;top:4.05px" width="7.5" height="7.5" viewBox="0 0 9 9"><path d="M1.7 4.5H7.3M4.5 1.7V7.3" stroke="#000" stroke-width="1.25"/></svg>
<svg style="left:34.10px;top:0.20px;overflow:visible" width="14.33" height="14.33" viewBox="0 0 16 16"><use href="#i_folder"/></svg>
<span class="t" style="left:52.70px;top:2.51px;font-size:10.0px;letter-spacing:0.85px;transform:scale(0.7922,0.95);">Graphics</span>
<div style="left:29.00px;top:22.00px;width:5.50px;height:1.00px;background-image:linear-gradient(to right,#BAB8AA 50%,transparent 50%);background-size:2px 1px"></div>
<div class="pb" style="left:21.25px;top:18.38px"></div>
<svg style="left:21.25px;top:18.38px" width="7.5" height="7.5" viewBox="0 0 9 9"><path d="M1.7 4.5H7.3M4.5 1.7V7.3" stroke="#000" stroke-width="1.25"/></svg>
<svg style="left:34.10px;top:14.53px;overflow:visible" width="14.33" height="14.33" viewBox="0 0 16 16"><use href="#i_folder"/></svg>
<span class="t" style="left:52.70px;top:16.84px;font-size:10.0px;letter-spacing:0.85px;transform:scale(0.8259,0.95);">Maps</span>
<div style="left:29.00px;top:36.00px;width:5.50px;height:1.00px;background-image:linear-gradient(to right,#BAB8AA 50%,transparent 50%);background-size:2px 1px"></div>
<div class="pb" style="left:21.25px;top:32.71px"></div>
<svg style="left:21.25px;top:32.71px" width="7.5" height="7.5" viewBox="0 0 9 9"><path d="M1.7 4.5H7.3M4.5 1.7V7.3" stroke="#000" stroke-width="1.25"/></svg>
<svg style="left:34.10px;top:28.86px;overflow:visible" width="14.33" height="14.33" viewBox="0 0 16 16"><use href="#i_folder"/></svg>
<span class="t" style="left:52.70px;top:31.17px;font-size:10.0px;letter-spacing:0.85px;transform:scale(0.8278,0.95);">RS_of_Marion_County</span>
<div style="left:29.00px;top:50.00px;width:5.50px;height:1.00px;background-image:linear-gradient(to right,#BAB8AA 50%,transparent 50%);background-size:2px 1px"></div>
<div class="pb" style="left:21.25px;top:47.04px"></div>
<svg style="left:21.25px;top:47.04px" width="7.5" height="7.5" viewBox="0 0 9 9"><path d="M1.7 4.5H7.3M4.5 1.7V7.3" stroke="#000" stroke-width="1.25"/></svg>
<svg style="left:34.10px;top:43.19px;overflow:visible" width="14.33" height="14.33" viewBox="0 0 16 16"><use href="#i_folder"/></svg>
<span class="t" style="left:52.70px;top:45.50px;font-size:10.0px;letter-spacing:0.85px;transform:scale(0.7951,0.95);">Video</span>
<div style="left:29.00px;top:65.00px;width:5.50px;height:1.00px;background-image:linear-gradient(to right,#BAB8AA 50%,transparent 50%);background-size:2px 1px"></div>
<div class="pb" style="left:21.25px;top:61.37px"></div>
<svg style="left:21.25px;top:61.37px" width="7.5" height="7.5" viewBox="0 0 9 9"><path d="M1.7 4.5H7.3" stroke="#000" stroke-width="1.25"/></svg>
<svg style="left:34.10px;top:57.52px;overflow:visible" width="14.33" height="14.33" viewBox="0 0 16 16"><use href="#i_gdb"/></svg>
<div style="left:51.50px;top:57.62px;width:106.30px;height:13.80px;background:#316AC5;outline:1px dotted #C89030;outline-offset:-1px"></div>
<span class="t" style="left:52.70px;top:59.83px;font-size:10.0px;letter-spacing:0.85px;transform:scale(0.8246,0.95);color:#fff">FCC_Geodatabase.mdb</span>
<div style="left:42.00px;top:79.00px;width:9.55px;height:1.00px;background-image:linear-gradient(to right,#BAB8AA 50%,transparent 50%);background-size:2px 1px"></div>
<svg style="left:51.15px;top:71.85px;overflow:visible" width="14.33" height="14.33" viewBox="0 0 16 16"><use href="#i_fds"/></svg>
<span class="t" style="left:69.75px;top:74.16px;font-size:10.0px;letter-spacing:0.85px;transform:scale(0.8451,0.95);">Extra_Features</span>
<div style="left:46.00px;top:93.00px;width:5.55px;height:1.00px;background-image:linear-gradient(to right,#BAB8AA 50%,transparent 50%);background-size:2px 1px"></div>
<div class="pb" style="left:38.30px;top:90.03px"></div>
<svg style="left:38.30px;top:90.03px" width="7.5" height="7.5" viewBox="0 0 9 9"><path d="M1.7 4.5H7.3" stroke="#000" stroke-width="1.25"/></svg>
<svg style="left:51.15px;top:86.18px;overflow:visible" width="14.33" height="14.33" viewBox="0 0 16 16"><use href="#i_fds"/></svg>
<span class="t" style="left:69.75px;top:88.49px;font-size:10.0px;letter-spacing:0.85px;transform:scale(0.8015,0.95);">Flora</span>
<div style="left:59.00px;top:108.00px;width:9.60px;height:1.00px;background-image:linear-gradient(to right,#BAB8AA 50%,transparent 50%);background-size:2px 1px"></div>
<svg style="left:68.20px;top:100.51px;overflow:visible" width="14.33" height="14.33" viewBox="0 0 16 16"><use href="#i_pt"/></svg>
<span class="t" style="left:86.80px;top:102.82px;font-size:10.0px;letter-spacing:0.85px;transform:scale(0.7883,0.95);">Plantings</span>
<div style="left:59.00px;top:122.00px;width:9.60px;height:1.00px;background-image:linear-gradient(to right,#BAB8AA 50%,transparent 50%);background-size:2px 1px"></div>
<svg style="left:68.20px;top:114.84px;overflow:visible" width="14.33" height="14.33" viewBox="0 0 16 16"><use href="#i_pt"/></svg>
<span class="t" style="left:86.80px;top:117.15px;font-size:10.0px;letter-spacing:0.85px;transform:scale(0.8440,0.95);">Tree</span>
<div style="left:46.00px;top:136.00px;width:5.55px;height:1.00px;background-image:linear-gradient(to right,#BAB8AA 50%,transparent 50%);background-size:2px 1px"></div>
<div class="pb" style="left:38.30px;top:133.02px"></div>
<svg style="left:38.30px;top:133.02px" width="7.5" height="7.5" viewBox="0 0 9 9"><path d="M1.7 4.5H7.3" stroke="#000" stroke-width="1.25"/></svg>
<svg style="left:51.15px;top:129.17px;overflow:visible" width="14.33" height="14.33" viewBox="0 0 16 16"><use href="#i_fds"/></svg>
<span class="t" style="left:69.75px;top:131.48px;font-size:10.0px;letter-spacing:0.85px;transform:scale(0.8349,0.95);">Monuments</span>
<div style="left:59.00px;top:151.00px;width:9.60px;height:1.00px;background-image:linear-gradient(to right,#BAB8AA 50%,transparent 50%);background-size:2px 1px"></div>
<svg style="left:68.20px;top:143.50px;overflow:visible" width="14.33" height="14.33" viewBox="0 0 16 16"><use href="#i_pt"/></svg>
<span class="t" style="left:86.80px;top:145.81px;font-size:10.0px;letter-spacing:0.85px;transform:scale(0.8238,0.95);">F_stones</span>
<div style="left:59.00px;top:165.00px;width:9.60px;height:1.00px;background-image:linear-gradient(to right,#BAB8AA 50%,transparent 50%);background-size:2px 1px"></div>
<svg style="left:68.20px;top:157.83px;overflow:visible" width="14.33" height="14.33" viewBox="0 0 16 16"><use href="#i_pt"/></svg>
<span class="t" style="left:86.80px;top:160.14px;font-size:10.0px;letter-spacing:0.85px;transform:scale(0.8344,0.95);">Headstones</span>
<div style="left:59.00px;top:179.00px;width:9.60px;height:1.00px;background-image:linear-gradient(to right,#BAB8AA 50%,transparent 50%);background-size:2px 1px"></div>
<svg style="left:68.20px;top:172.16px;overflow:visible" width="14.33" height="14.33" viewBox="0 0 16 16"><use href="#i_pt"/></svg>
<span class="t" style="left:86.80px;top:174.47px;font-size:10.0px;letter-spacing:0.85px;transform:scale(0.8188,0.95);">Litman_Cornerstones</span>
<div style="left:46.00px;top:194.00px;width:5.55px;height:1.00px;background-image:linear-gradient(to right,#BAB8AA 50%,transparent 50%);background-size:2px 1px"></div>
<div class="pb" style="left:38.30px;top:190.34px"></div>
<svg style="left:38.30px;top:190.34px" width="7.5" height="7.5" viewBox="0 0 9 9"><path d="M1.7 4.5H7.3" stroke="#000" stroke-width="1.25"/></svg>
<svg style="left:51.15px;top:186.49px;overflow:visible" width="14.33" height="14.33" viewBox="0 0 16 16"><use href="#i_fds"/></svg>
<span class="t" style="left:69.75px;top:188.80px;font-size:10.0px;letter-spacing:0.85px;transform:scale(0.7875,0.95);">Plots</span>
<div style="left:59.00px;top:208.00px;width:9.60px;height:1.00px;background-image:linear-gradient(to right,#BAB8AA 50%,transparent 50%);background-size:2px 1px"></div>
<svg style="left:68.20px;top:200.82px;overflow:visible" width="14.33" height="14.33" viewBox="0 0 16 16"><use href="#i_poly"/></svg>
<span class="t" style="left:86.80px;top:203.13px;font-size:10.0px;letter-spacing:0.85px;transform:scale(0.8395,0.95);">Cemetery_Boundary</span>
<div style="left:59.00px;top:222.00px;width:9.60px;height:1.00px;background-image:linear-gradient(to right,#BAB8AA 50%,transparent 50%);background-size:2px 1px"></div>
<svg style="left:68.20px;top:215.15px;overflow:visible" width="14.33" height="14.33" viewBox="0 0 16 16"><use href="#i_line"/></svg>
<span class="t" style="left:86.80px;top:217.46px;font-size:10.0px;letter-spacing:0.85px;transform:scale(0.7860,0.95);">Flemings_Family_Plot</span>
<div style="left:59.00px;top:237.00px;width:9.60px;height:1.00px;background-image:linear-gradient(to right,#BAB8AA 50%,transparent 50%);background-size:2px 1px"></div>
<svg style="left:68.20px;top:229.48px;overflow:visible" width="14.33" height="14.33" viewBox="0 0 16 16"><use href="#i_line"/></svg>
<span class="t" style="left:86.80px;top:231.79px;font-size:10.0px;letter-spacing:0.85px;transform:scale(0.8097,0.95);">Watsons_Family_Plot</span>
<div style="left:46.00px;top:251.00px;width:5.55px;height:1.00px;background-image:linear-gradient(to right,#BAB8AA 50%,transparent 50%);background-size:2px 1px"></div>
<div class="pb" style="left:38.30px;top:247.66px"></div>
<svg style="left:38.30px;top:247.66px" width="7.5" height="7.5" viewBox="0 0 9 9"><path d="M1.7 4.5H7.3" stroke="#000" stroke-width="1.25"/></svg>
<svg style="left:51.15px;top:243.81px;overflow:visible" width="14.33" height="14.33" viewBox="0 0 16 16"><use href="#i_ras"/></svg>
<span class="t" style="left:69.75px;top:246.12px;font-size:10.0px;letter-spacing:0.85px;transform:scale(0.8462,0.95);">fairmont_west_ne</span>
<div style="left:59.00px;top:265.00px;width:9.60px;height:1.00px;background-image:linear-gradient(to right,#BAB8AA 50%,transparent 50%);background-size:2px 1px"></div>
<svg style="left:68.20px;top:258.14px;overflow:visible" width="14.33" height="14.33" viewBox="0 0 16 16"><use href="#i_band"/></svg>
<span class="t" style="left:86.80px;top:260.45px;font-size:10.0px;letter-spacing:0.85px;transform:scale(0.8077,0.95);">Band_1</span>
<div style="left:59.00px;top:280.00px;width:9.60px;height:1.00px;background-image:linear-gradient(to right,#BAB8AA 50%,transparent 50%);background-size:2px 1px"></div>
<svg style="left:68.20px;top:272.47px;overflow:visible" width="14.33" height="14.33" viewBox="0 0 16 16"><use href="#i_band"/></svg>
<span class="t" style="left:86.80px;top:274.78px;font-size:10.0px;letter-spacing:0.85px;transform:scale(0.8284,0.95);">Band_2</span>
<div style="left:59.00px;top:294.00px;width:9.60px;height:1.00px;background-image:linear-gradient(to right,#BAB8AA 50%,transparent 50%);background-size:2px 1px"></div>
<svg style="left:68.20px;top:286.80px;overflow:visible" width="14.33" height="14.33" viewBox="0 0 16 16"><use href="#i_band"/></svg>
<span class="t" style="left:86.80px;top:289.11px;font-size:10.0px;letter-spacing:0.85px;transform:scale(0.8284,0.95);">Band_3</span>
<div style="left:42.00px;top:308.00px;width:9.55px;height:1.00px;background-image:linear-gradient(to right,#BAB8AA 50%,transparent 50%);background-size:2px 1px"></div>
<svg style="left:51.15px;top:301.13px;overflow:visible" width="14.33" height="14.33" viewBox="0 0 16 16"><use href="#i_pt"/></svg>
<span class="t" style="left:69.75px;top:303.44px;font-size:10.0px;letter-spacing:0.85px;transform:scale(0.8102,0.95);">GNIS_Cemeteries_WV</span>
<div style="left:42.00px;top:323.00px;width:9.55px;height:1.00px;background-image:linear-gradient(to right,#BAB8AA 50%,transparent 50%);background-size:2px 1px"></div>
<svg style="left:51.15px;top:315.46px;overflow:visible" width="14.33" height="14.33" viewBox="0 0 16 16"><use href="#i_tbl"/></svg>
<span class="t" style="left:69.75px;top:317.77px;font-size:10.0px;letter-spacing:0.85px;transform:scale(0.8642,0.95);">Interred_Attributes</span>
<div style="left:42.00px;top:337.00px;width:9.55px;height:1.00px;background-image:linear-gradient(to right,#BAB8AA 50%,transparent 50%);background-size:2px 1px"></div>
<svg style="left:51.15px;top:329.79px;overflow:visible" width="14.33" height="14.33" viewBox="0 0 16 16"><use href="#i_poly"/></svg>
<span class="t" style="left:69.75px;top:332.10px;font-size:10.0px;letter-spacing:0.85px;transform:scale(0.8346,0.95);">Marion_County</span>
<div style="left:46.00px;top:351.00px;width:5.55px;height:1.00px;background-image:linear-gradient(to right,#BAB8AA 50%,transparent 50%);background-size:2px 1px"></div>
<div class="pb" style="left:38.30px;top:347.97px"></div>
<svg style="left:38.30px;top:347.97px" width="7.5" height="7.5" viewBox="0 0 9 9"><path d="M1.7 4.5H7.3M4.5 1.7V7.3" stroke="#000" stroke-width="1.25"/></svg>
<svg style="left:51.15px;top:344.12px;overflow:visible" width="14.33" height="14.33" viewBox="0 0 16 16"><use href="#i_ras"/></svg>
<span class="t" style="left:69.75px;top:346.43px;font-size:10.0px;letter-spacing:0.85px;transform:scale(0.8569,0.95);">rasterofdem</span>
<div style="left:42.00px;top:366.00px;width:9.55px;height:1.00px;background-image:linear-gradient(to right,#BAB8AA 50%,transparent 50%);background-size:2px 1px"></div>
<svg style="left:51.15px;top:358.45px;overflow:visible" width="14.33" height="14.33" viewBox="0 0 16 16"><use href="#i_poly"/></svg>
<span class="t" style="left:69.75px;top:360.76px;font-size:10.0px;letter-spacing:0.85px;transform:scale(0.8241,0.95);">WV_Counties</span>
<div style="left:12.00px;top:380.00px;width:5.45px;height:1.00px;background-image:linear-gradient(to right,#BAB8AA 50%,transparent 50%);background-size:2px 1px"></div>
<div class="pb" style="left:4.20px;top:376.63px"></div>
<svg style="left:4.20px;top:376.63px" width="7.5" height="7.5" viewBox="0 0 9 9"><path d="M1.7 4.5H7.3" stroke="#000" stroke-width="1.25"/></svg>
<svg style="left:17.05px;top:372.78px;overflow:visible" width="14.33" height="14.33" viewBox="0 0 16 16"><use href="#i_folder"/></svg>
<span class="t" style="left:35.65px;top:375.09px;font-size:10.0px;letter-spacing:0.85px;transform:scale(0.8368,0.95);">GIS_Database_Stuff</span>
<div style="left:29.00px;top:394.00px;width:5.50px;height:1.00px;background-image:linear-gradient(to right,#BAB8AA 50%,transparent 50%);background-size:2px 1px"></div>
<div class="pb" style="left:21.25px;top:390.96px"></div>
<svg style="left:21.25px;top:390.96px" width="7.5" height="7.5" viewBox="0 0 9 9"><path d="M1.7 4.5H7.3M4.5 1.7V7.3" stroke="#000" stroke-width="1.25"/></svg>
<svg style="left:34.10px;top:387.11px;overflow:visible" width="14.33" height="14.33" viewBox="0 0 16 16"><use href="#i_folder"/></svg>
<span class="t" style="left:52.70px;top:389.42px;font-size:10.0px;letter-spacing:0.85px;transform:scale(0.8384,0.95);">Attribute_Tables_Database</span>
<div style="left:29.00px;top:409.00px;width:5.50px;height:1.00px;background-image:linear-gradient(to right,#BAB8AA 50%,transparent 50%);background-size:2px 1px"></div>
<div class="pb" style="left:21.25px;top:405.29px"></div>
<svg style="left:21.25px;top:405.29px" width="7.5" height="7.5" viewBox="0 0 9 9"><path d="M1.7 4.5H7.3M4.5 1.7V7.3" stroke="#000" stroke-width="1.25"/></svg>
<svg style="left:34.10px;top:401.44px;overflow:visible" width="14.33" height="14.33" viewBox="0 0 16 16"><use href="#i_folder"/></svg>
<span class="t" style="left:52.70px;top:403.75px;font-size:10.0px;letter-spacing:0.85px;transform:scale(0.8363,0.95);">Farimont_City_Cemetery_Monument_Info</span>
<div style="left:29.00px;top:423.00px;width:5.50px;height:1.00px;background-image:linear-gradient(to right,#BAB8AA 50%,transparent 50%);background-size:2px 1px"></div>
<div class="pb" style="left:21.25px;top:419.62px"></div>
<svg style="left:21.25px;top:419.62px" width="7.5" height="7.5" viewBox="0 0 9 9"><path d="M1.7 4.5H7.3M4.5 1.7V7.3" stroke="#000" stroke-width="1.25"/></svg>
<svg style="left:34.10px;top:415.77px;overflow:visible" width="14.33" height="14.33" viewBox="0 0 16 16"><use href="#i_folder"/></svg>
<span class="t" style="left:52.70px;top:418.08px;font-size:10.0px;letter-spacing:0.85px;transform:scale(0.8414,0.95);">Features</span>
<div style="left:29.00px;top:437.00px;width:5.50px;height:1.00px;background-image:linear-gradient(to right,#BAB8AA 50%,transparent 50%);background-size:2px 1px"></div>
<div class="pb" style="left:21.25px;top:433.95px"></div>
<svg style="left:21.25px;top:433.95px" width="7.5" height="7.5" viewBox="0 0 9 9"><path d="M1.7 4.5H7.3M4.5 1.7V7.3" stroke="#000" stroke-width="1.25"/></svg>
<svg style="left:34.10px;top:430.10px;overflow:visible" width="14.33" height="14.33" viewBox="0 0 16 16"><use href="#i_folder"/></svg>
<span class="t" style="left:52.70px;top:432.41px;font-size:10.0px;letter-spacing:0.85px;transform:scale(0.8281,0.95);">InterredHistories</span>
<div style="left:29.00px;top:452.00px;width:5.50px;height:1.00px;background-image:linear-gradient(to right,#BAB8AA 50%,transparent 50%);background-size:2px 1px"></div>
<div class="pb" style="left:21.25px;top:448.28px"></div>
<svg style="left:21.25px;top:448.28px" width="7.5" height="7.5" viewBox="0 0 9 9"><path d="M1.7 4.5H7.3M4.5 1.7V7.3" stroke="#000" stroke-width="1.25"/></svg>
<svg style="left:34.10px;top:444.43px;overflow:visible" width="14.33" height="14.33" viewBox="0 0 16 16"><use href="#i_folder"/></svg>
<span class="t" style="left:52.70px;top:446.74px;font-size:10.0px;letter-spacing:0.85px;transform:scale(0.8249,0.95);">Photos</span>
<div style="left:29.00px;top:466.00px;width:5.50px;height:1.00px;background-image:linear-gradient(to right,#BAB8AA 50%,transparent 50%);background-size:2px 1px"></div>
<div class="pb" style="left:21.25px;top:462.61px"></div>
<svg style="left:21.25px;top:462.61px" width="7.5" height="7.5" viewBox="0 0 9 9"><path d="M1.7 4.5H7.3M4.5 1.7V7.3" stroke="#000" stroke-width="1.25"/></svg>
<svg style="left:34.10px;top:458.76px;overflow:visible" width="14.33" height="14.33" viewBox="0 0 16 16"><use href="#i_folder"/></svg>
<span class="t" style="left:52.70px;top:461.07px;font-size:10.0px;letter-spacing:0.85px;transform:scale(0.8261,0.95);">RS_of_Marion_County</span>
<div style="left:29.00px;top:480.00px;width:5.50px;height:1.00px;background-image:linear-gradient(to right,#BAB8AA 50%,transparent 50%);background-size:2px 1px"></div>
<div class="pb" style="left:21.25px;top:476.94px"></div>
<svg style="left:21.25px;top:476.94px" width="7.5" height="7.5" viewBox="0 0 9 9"><path d="M1.7 4.5H7.3M4.5 1.7V7.3" stroke="#000" stroke-width="1.25"/></svg>
<svg style="left:34.10px;top:473.09px;overflow:visible" width="14.33" height="14.33" viewBox="0 0 16 16"><use href="#i_rasc"/></svg>
<span class="t" style="left:52.70px;top:475.40px;font-size:10.0px;letter-spacing:0.85px;transform:scale(0.8395,0.95);">fairmont</span>
<div style="left:29.00px;top:495.00px;width:5.50px;height:1.00px;background-image:linear-gradient(to right,#BAB8AA 50%,transparent 50%);background-size:2px 1px"></div>
<div class="pb" style="left:21.25px;top:491.27px"></div>
<svg style="left:21.25px;top:491.27px" width="7.5" height="7.5" viewBox="0 0 9 9"><path d="M1.7 4.5H7.3M4.5 1.7V7.3" stroke="#000" stroke-width="1.25"/></svg>
<svg style="left:34.10px;top:487.42px;overflow:visible" width="14.33" height="14.33" viewBox="0 0 16 16"><use href="#i_rasc"/></svg>
<span class="t" style="left:52.70px;top:489.73px;font-size:10.0px;letter-spacing:0.85px;transform:scale(0.8151,0.95);">fairmontc1</span>
<div style="left:29.00px;top:509.00px;width:5.50px;height:1.00px;background-image:linear-gradient(to right,#BAB8AA 50%,transparent 50%);background-size:2px 1px"></div>
<div class="pb" style="left:21.25px;top:505.60px"></div>
<svg style="left:21.25px;top:505.60px" width="7.5" height="7.5" viewBox="0 0 9 9"><path d="M1.7 4.5H7.3M4.5 1.7V7.3" stroke="#000" stroke-width="1.25"/></svg>
<svg style="left:34.10px;top:501.75px;overflow:visible" width="14.33" height="14.33" viewBox="0 0 16 16"><use href="#i_rasc"/></svg>
<span class="t" style="left:52.70px;top:504.06px;font-size:10.0px;letter-spacing:0.85px;transform:scale(0.8280,0.95);">fairmontc2</span>
<div style="left:29.00px;top:523.00px;width:5.50px;height:1.00px;background-image:linear-gradient(to right,#BAB8AA 50%,transparent 50%);background-size:2px 1px"></div>
<div class="pb" style="left:21.25px;top:519.93px"></div>
<svg style="left:21.25px;top:519.93px" width="7.5" height="7.5" viewBox="0 0 9 9"><path d="M1.7 4.5H7.3M4.5 1.7V7.3" stroke="#000" stroke-width="1.25"/></svg>
<svg style="left:34.10px;top:516.08px;overflow:visible" width="14.33" height="14.33" viewBox="0 0 16 16"><use href="#i_rasc"/></svg>
<span class="t" style="left:52.70px;top:518.39px;font-size:10.0px;letter-spacing:0.85px;transform:scale(0.8280,0.95);">fairmontc3</span>
</div>
<div style="left:245.4px;top:94.1px;width:15.2px;height:532.4px;background:linear-gradient(to right,#F1EFE8,#FEFEFB 70%,#EEEDE6)"></div>
<div class="sbtn" style="left:246.3px;top:94.9px;width:12.6px;height:13.4px"></div>
<svg style="left:248.3px;top:98.3px" width="8.4" height="5.6" viewBox="0 0 8 5.3"><path d="M0.9 4.4L4 1.3L7.1 4.4" fill="none" stroke="#4D6185" stroke-width="1.8"/></svg>
<div class="sbtn" style="left:246.3px;top:611.6px;width:12.6px;height:13.4px"></div>
<svg style="left:248.3px;top:615.4px" width="8.4" height="5.6" viewBox="0 0 8 5.3"><path d="M0.9 0.9L4 4L7.1 0.9" fill="none" stroke="#4D6185" stroke-width="1.8"/></svg>
<div class="sbtn" style="left:246.2px;top:307.1px;width:12.2px;height:140px"></div>
<svg style="left:249.4px;top:374.4px" width="5.5" height="5.5" viewBox="0 0 5 5"><path d="M0 0.5H5M0 2.5H5M0 4.5H5" stroke="#EEF4FE" stroke-width="0.9"/><path d="M0 1.5H5M0 3.5H5" stroke="#A8BCF0" stroke-width="0.7"/></svg>
<div style="left:4.4px;top:626.3px;width:241px;height:14.4px;background:linear-gradient(to bottom,#EEEDE5,#FEFEFB 70%)"></div>
<div class="sbtn" style="left:5.6px;top:627.4px;width:13.4px;height:13.1px"></div>
<svg style="left:8.2px;top:629.9px" width="5.3" height="7.4" viewBox="0 0 5 7"><path d="M4.3 0.6L1 3.5L4.3 6.4" fill="none" stroke="#4D6185" stroke-width="1.9"/></svg>
<div class="sbtn" style="left:229.8px;top:627.4px;width:13.4px;height:13.1px"></div>
<svg style="left:233.4px;top:629.9px" width="5.3" height="7.4" viewBox="0 0 5 7"><path d="M0.7 0.6L4 3.5L0.7 6.4" fill="none" stroke="#4D6185" stroke-width="1.9"/></svg>
<div class="sbtn" style="left:74.5px;top:627.4px;width:104.8px;height:12.4px"></div>
<svg style="left:125.4px;top:630.6px" width="5.5" height="5.5" viewBox="0 0 5 5"><path d="M0.5 0V5M2.5 0V5M4.5 0V5" stroke="#EEF4FE" stroke-width="0.9"/><path d="M1.5 0V5M3.5 0V5" stroke="#A8BCF0" stroke-width="0.7"/></svg>
<div style="left:245.40px;top:626.10px;width:14.80px;height:15.50px;background:#ECE9D8"></div>
<div style="left:4.40px;top:641.20px;width:258.00px;height:1.80px;background:#EFEDE4"></div>
<div style="left:319.8px;top:81px;width:41.2px;height:17px;border-top:1px solid #fff;border-left:1px solid #fff;border-right:1.2px solid #716F64;box-sizing:border-box"></div>
<div style="left:362.9px;top:81px;width:48.9px;height:17px;border-top:1px solid #fff;border-left:1px solid #fff;border-right:1.2px solid #716F64;box-sizing:border-box"></div>
<div style="left:267.20px;top:97.40px;width:583.00px;height:1.10px;background:#fff"></div>
<div style="left:266.6px;top:79.6px;width:51.4px;height:19px;background:#ECE9D8;border-top:1px solid #fff;border-left:1px solid #fff;border-right:1.2px solid #716F64;box-sizing:border-box"></div>
<span class="t" style="left:273.40px;top:82.53px;font-size:10.0px;letter-spacing:0.85px;transform:scale(0.8196,1.0);">Contents</span>
<span class="t" style="left:322.10px;top:84.51px;font-size:10.0px;letter-spacing:0.85px;transform:scale(0.8157,0.95);">Preview</span>
<span class="t" style="left:366.50px;top:84.51px;font-size:10.0px;letter-spacing:0.85px;transform:scale(0.8449,0.95);">Metadata</span>
<div style="left:270.00px;top:102.10px;width:580.00px;height:539.60px;background:#fff"></div>
<div style="left:268.00px;top:641.70px;width:582.00px;height:1.30px;background:#EFEDE4"></div>
<div style="left:270px;top:102.1px;width:580px;height:15.2px;background:#ECE9D8;border-top:1.2px solid #fff;border-left:1.4px solid #fff;border-bottom:1.3px solid #ACA899;box-sizing:border-box"></div>
<div style="left:448.20px;top:103.30px;width:1.20px;height:12.70px;background:#ACA899"></div>
<div style="left:449.40px;top:103.30px;width:1.20px;height:12.70px;background:#fff"></div>
<div style="left:627.60px;top:103.30px;width:1.20px;height:12.70px;background:#ACA899"></div>
<div style="left:628.80px;top:103.30px;width:1.20px;height:12.70px;background:#fff"></div>
<span class="t" style="left:274.40px;top:105.41px;font-size:10.0px;letter-spacing:0.85px;transform:scale(0.8034,0.95);">Name</span>
<span class="t" style="left:454.10px;top:105.41px;font-size:10.0px;letter-spacing:0.85px;transform:scale(0.8866,0.95);">Type</span>
<svg style="left:271.50px;top:117.30px;overflow:visible" width="14.33" height="14.33" viewBox="0 0 16 16"><use href="#i_fds"/></svg>
<span class="t" style="left:287.10px;top:120.81px;font-size:10.0px;letter-spacing:0.85px;transform:scale(0.8451,0.95);">Extra_Features</span>
<span class="t" style="left:454.10px;top:120.71px;font-size:10.0px;letter-spacing:0.85px;transform:scale(0.8261,0.95);">Personal Geodatabase Feature Data...</span>
<svg style="left:271.50px;top:132.52px;overflow:visible" width="14.33" height="14.33" viewBox="0 0 16 16"><use href="#i_fds"/></svg>
<span class="t" style="left:287.10px;top:136.03px;font-size:10.0px;letter-spacing:0.85px;transform:scale(0.8015,0.95);">Flora</span>
<span class="t" style="left:454.10px;top:135.93px;font-size:10.0px;letter-spacing:0.85px;transform:scale(0.8261,0.95);">Personal Geodatabase Feature Data...</span>
<svg style="left:271.50px;top:147.74px;overflow:visible" width="14.33" height="14.33" viewBox="0 0 16 16"><use href="#i_fds"/></svg>
<span class="t" style="left:287.10px;top:151.25px;font-size:10.0px;letter-spacing:0.85px;transform:scale(0.8349,0.95);">Monuments</span>
<span class="t" style="left:454.10px;top:151.15px;font-size:10.0px;letter-spacing:0.85px;transform:scale(0.8261,0.95);">Personal Geodatabase Feature Data...</span>
<svg style="left:271.50px;top:162.96px;overflow:visible" width="14.33" height="14.33" viewBox="0 0 16 16"><use href="#i_fds"/></svg>
<div style="left:286.20px;top:163.86px;width:27.30px;height:14.80px;background:#ECE9D8"></div>
<span class="t" style="left:287.10px;top:166.47px;font-size:10.0px;letter-spacing:0.85px;transform:scale(0.7875,0.95);">Plots</span>
<span class="t" style="left:454.10px;top:166.37px;font-size:10.0px;letter-spacing:0.85px;transform:scale(0.8261,0.95);">Personal Geodatabase Feature Data...</span>
<svg style="left:271.50px;top:178.18px;overflow:visible" width="14.33" height="14.33" viewBox="0 0 16 16"><use href="#i_ras"/></svg>
<span class="t" style="left:287.10px;top:181.69px;font-size:10.0px;letter-spacing:0.85px;transform:scale(0.8462,0.95);">fairmont_west_ne</span>
<span class="t" style="left:454.10px;top:181.59px;font-size:10.0px;letter-spacing:0.85px;transform:scale(0.8183,0.95);">Personal Geodatabase Raster Dataset</span>
<svg style="left:271.50px;top:193.40px;overflow:visible" width="14.33" height="14.33" viewBox="0 0 16 16"><use href="#i_pt"/></svg>
<span class="t" style="left:287.10px;top:196.91px;font-size:10.0px;letter-spacing:0.85px;transform:scale(0.8102,0.95);">GNIS_Cemeteries_WV</span>
<span class="t" style="left:454.10px;top:196.81px;font-size:10.0px;letter-spacing:0.85px;transform:scale(0.8083,0.95);">Personal Geodatabase Feature Class</span>
<svg style="left:271.50px;top:208.62px;overflow:visible" width="14.33" height="14.33" viewBox="0 0 16 16"><use href="#i_tbl"/></svg>
<span class="t" style="left:287.10px;top:212.13px;font-size:10.0px;letter-spacing:0.85px;transform:scale(0.8642,0.95);">Interred_Attributes</span>
<span class="t" style="left:454.10px;top:212.03px;font-size:10.0px;letter-spacing:0.85px;transform:scale(0.8124,0.95);">Personal Geodatabase Table</span>
<svg style="left:271.50px;top:223.84px;overflow:visible" width="14.33" height="14.33" viewBox="0 0 16 16"><use href="#i_poly"/></svg>
<span class="t" style="left:287.10px;top:227.35px;font-size:10.0px;letter-spacing:0.85px;transform:scale(0.8346,0.95);">Marion_County</span>
<span class="t" style="left:454.10px;top:227.25px;font-size:10.0px;letter-spacing:0.85px;transform:scale(0.8083,0.95);">Personal Geodatabase Feature Class</span>
<svg style="left:271.50px;top:239.06px;overflow:visible" width="14.33" height="14.33" viewBox="0 0 16 16"><use href="#i_ras"/></svg>
<span class="t" style="left:287.10px;top:242.57px;font-size:10.0px;letter-spacing:0.85px;transform:scale(0.8569,0.95);">rasterofdem</span>
<span class="t" style="left:454.10px;top:242.47px;font-size:10.0px;letter-spacing:0.85px;transform:scale(0.8183,0.95);">Personal Geodatabase Raster Dataset</span>
<svg style="left:271.50px;top:254.28px;overflow:visible" width="14.33" height="14.33" viewBox="0 0 16 16"><use href="#i_poly"/></svg>
<span class="t" style="left:287.10px;top:257.79px;font-size:10.0px;letter-spacing:0.85px;transform:scale(0.8241,0.95);">WV_Counties</span>
<span class="t" style="left:454.10px;top:257.69px;font-size:10.0px;letter-spacing:0.85px;transform:scale(0.8083,0.95);">Personal Geodatabase Feature Class</span>
</body></html>
